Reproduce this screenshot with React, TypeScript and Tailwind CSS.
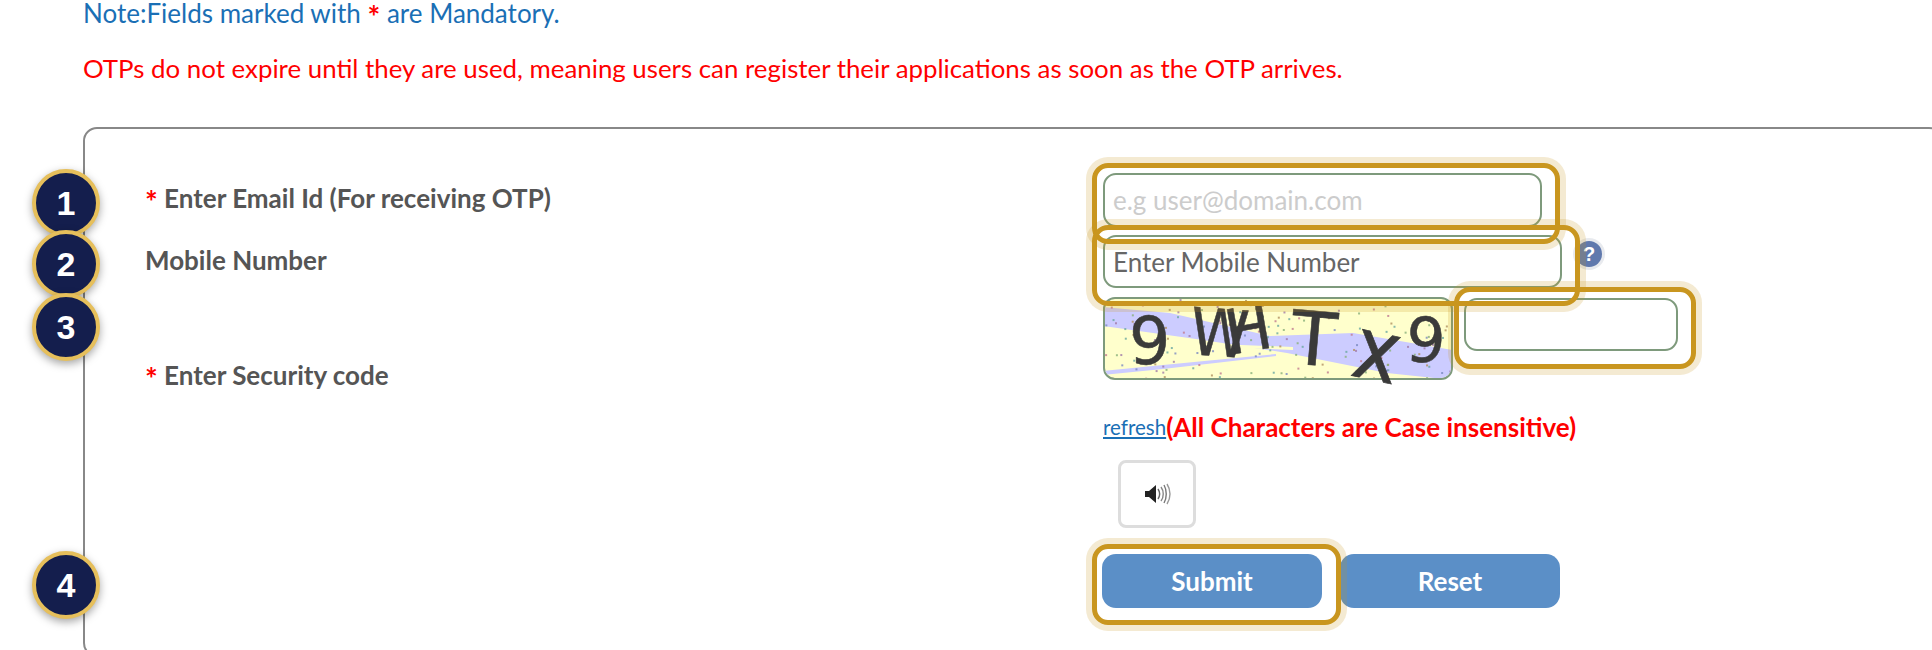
import React from "react";

const Star = () => <span className="text-[#ff0000] font-bold text-[30px] leading-[0] align-[-5px]">*</span>;

// fixed noise for the captcha picture
const DOT_COLORS = ["#a07aa8", "#6aa8a0", "#c07a90", "#7a8ac0", "#8ab07a", "#b09060"];
const noise = (n: number) => {
  const v = Math.sin(n * 12.9898) * 43758.5453;
  return v - Math.floor(v);
};
const dots = Array.from({ length: 170 }, (_, i) => ({
  x: noise(i + 1) * 346 + 2,
  y: noise(i + 501) * 79 + 2,
  c: DOT_COLORS[i % DOT_COLORS.length],
}));

const Captcha = () => (
  <div className="relative w-[350px] h-[83px] shrink-0 rounded-[12px] border-2 border-[#7e9a7c] bg-[#ffffcc]">
    <svg width="346" height="79" viewBox="2 2 346 79" className="overflow-visible">
      <defs>
        <clipPath id="captcha-clip">
          <rect x="2" y="2" width="346" height="79" rx="10" />
        </clipPath>
      </defs>
      <g clipPath="url(#captcha-clip)">
        <polygon fill="#ccccff" points="0,10 67,16 167,39 250,36 350,53 350,83 284,76 234,66 184,56 100,43 0,29" />
        <polygon fill="#ccccff" points="0,74 60,68 173,57 173,59 60,72 0,78" />
        <polygon fill="#ffffcc" points="90,46 190,50 190,53 90,49" />
        {dots.map((d, i) => (
          <rect key={i} x={d.x} y={d.y} width="2" height="2" fill={d.c} opacity="0.8" />
        ))}
      </g>
      <g fill="#3a3a3a" stroke="#3a3a3a" strokeWidth="0.5" fontFamily="'DejaVu Sans', sans-serif" className="blur-[0.6px]">
        <text transform="translate(26 67) scale(1.05 1.05)" fontSize="62">9</text>
        <text transform="translate(86 57) rotate(4) scale(0.95 1.05)" fontSize="62">W</text>
        <text transform="translate(126 58) rotate(-10) scale(1 1)" fontSize="62">H</text>
        <text transform="translate(186 66) rotate(5) scale(1.2 1.2)" fontSize="62">T</text>
        <text transform="translate(246 78) rotate(12) scale(1.25 1.4)" fontSize="62">x</text>
        <text transform="translate(302 64) rotate(3)" fontSize="62">9</text>
      </g>
    </svg>
  </div>
);

const SpeakerIcon = () => (
  <svg width="30" height="28" viewBox="0 0 30 28">
    <path d="M3 11h4l7-6v18l-7-6H3z" fill="#222222" />
    <path d="M16 9c2 3 2 7 0 10" fill="none" stroke="#666666" strokeWidth="1.4" />
    <path d="M19 7c3 4 3 10 0 14" fill="none" stroke="#888888" strokeWidth="1.4" />
    <path d="M22 5c3 5 3 13 0 18" fill="none" stroke="#777777" strokeWidth="1.4" />
    <path d="M25 4c4 6 4 14 0 20" fill="none" stroke="#999999" strokeWidth="1.4" />
  </svg>
);

const Badge = ({ n, top }: { n: number; top: string }) => (
  <div
    className={`absolute left-[32px] ${top} w-[68px] h-[68px] rounded-full bg-[#141e4d] border-[4px] border-[#e6bf5b] shadow-[0_3px_8px_rgba(0,0,0,0.35)] flex items-center justify-center text-white font-bold text-[34px] font-[Liberation_Sans,sans-serif]`}
  >
    {n}
  </div>
);

const Highlight = ({ className }: { className: string }) => (
  <div
    className={`absolute border-[5px] border-[#c9961f] rounded-[16px] shadow-[0_0_0_6px_rgba(201,150,31,0.2)] pointer-events-none ${className}`}
  />
);

const inputClass =
  "h-full w-full rounded-[13px] border-2 border-[#7e9a7c] bg-white px-[8px] text-[26px] outline-none";

export default function App() {
  return (
    <div className="relative w-[1932px] h-[650px] overflow-hidden bg-white font-[Lato,sans-serif]">
      <p className="pl-[83px] h-[26px] leading-[26px] text-[26px] text-[#1a6fb5]">
        Note:Fields marked with <Star /> are Mandatory.
      </p>
      <p className="pl-[83px] mt-[29px] h-[26px] leading-[26px] text-[25.85px] text-[#ff0000]">
        OTPs do not expire until they are used, meaning users can register their applications as soon as the OTP arrives.
      </p>

      <div className="mt-[46px] ml-[83px] w-[1860px] h-[530px] border-2 border-[#888888] rounded-[14px] pl-[60px] pt-[44px]">
        <div className="grid grid-cols-[958px_1fr] text-[26px] font-bold text-[#555555]">
          <div className="h-[54px] flex items-center pb-[3px]">
            <span>
              <Star /> Enter Email Id (For receiving OTP)
            </span>
          </div>
          <div className="h-[54px] w-[439px]">
            <input type="text" placeholder="e.g user@domain.com" className={`${inputClass} font-normal placeholder:text-[#cccccc]`} />
          </div>

          <div className="h-[53px] mt-[8px] flex items-center pb-[2px]">Mobile Number</div>
          <div className="h-[53px] mt-[8px] w-[459px]">
            <input type="text" placeholder="Enter Mobile Number" className={`${inputClass} font-normal placeholder:text-[#666666]`} />
          </div>

          <div className="mt-[9px] pt-[65px] leading-[26px]">
            <Star /> Enter Security code
          </div>
          <div className="mt-[9px] font-normal">
            <div className="flex">
              <Captcha />
              <div className="ml-[11px] mt-[1px] w-[214px] h-[53px]">
                <input type="text" className={inputClass} />
              </div>
            </div>
            <div className="mt-[32px] h-[30px] flex items-center">
              <a href="#" className="text-[20.5px] text-[#1a6fb5] underline">refresh</a>
              <span className="text-[26px] font-bold text-[#ff0000]">(All Characters are Case insensitive)</span>
            </div>
            <button className="mt-[18px] ml-[15px] w-[78px] h-[68px] rounded-[8px] border-[3px] border-[#dddddd] bg-white flex items-center justify-center">
              <SpeakerIcon />
            </button>
            <div className="mt-[26px] -ml-[1px] flex gap-[18px]">
              <button className="w-[220px] h-[54px] rounded-[14px] bg-[#5b8fc7] text-white font-bold text-[26px]">Submit</button>
              <button className="w-[220px] h-[54px] rounded-[14px] bg-[#5b8fc7] text-white font-bold text-[26px]">Reset</button>
            </div>
          </div>
        </div>
      </div>

      <div className="absolute left-[1576px] top-[241px] w-[26px] h-[26px] rounded-full bg-[#6079ad] shadow-[0_0_0_3px_rgba(180,185,200,0.3)] flex items-center justify-center text-white font-bold text-[20px] leading-none font-[Liberation_Sans,sans-serif]">
        ?
      </div>

      <Badge n={1} top="top-[169px]" />
      <Badge n={2} top="top-[230px]" />
      <Badge n={3} top="top-[293px]" />
      <Badge n={4} top="top-[551px]" />

      <Highlight className="left-[1092px] top-[163px] w-[468px] h-[81px]" />
      <Highlight className="left-[1092px] top-[225px] w-[488px] h-[81px]" />
      <Highlight className="left-[1454px] top-[287px] w-[242px] h-[82px]" />
      <Highlight className="left-[1092px] top-[544px] w-[249px] h-[81px]" />
    </div>
  );
}
